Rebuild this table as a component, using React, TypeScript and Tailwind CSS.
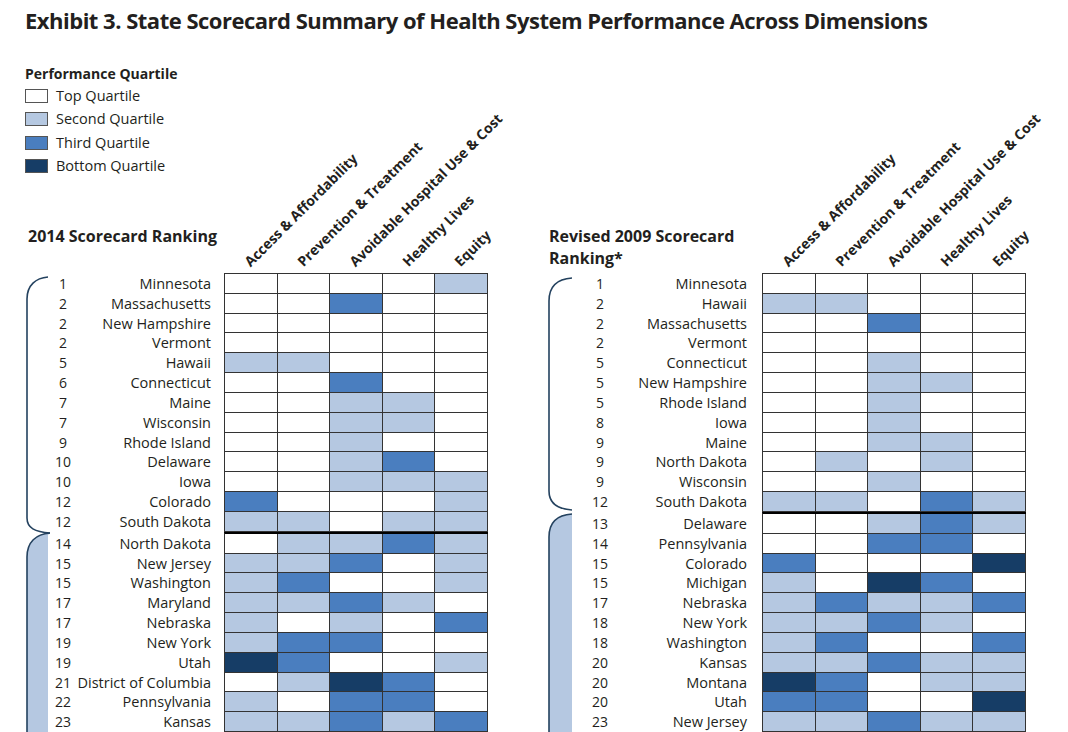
import React from 'react';

type Row = { rank: number; name: string; q: number[] };

const FILL = ['bg-white', 'bg-[#b5c8e1]', 'bg-[#4a7ebf]', 'bg-[#163d66]'];
const COLS = [53, 52, 53, 52, 53];
const COL_W = ['w-[53px]', 'w-[52px]', 'w-[53px]', 'w-[52px]', 'w-[53px]'];
const LABELS = [
  'Access & Affordability',
  'Prevention & Treatment',
  'Avoidable Hospital Use & Cost',
  'Healthy Lives',
  'Equity',
];

const rows2014: Row[] = [
  { rank: 1, name: 'Minnesota', q: [0, 0, 0, 0, 1] },
  { rank: 2, name: 'Massachusetts', q: [0, 0, 2, 0, 0] },
  { rank: 2, name: 'New Hampshire', q: [0, 0, 0, 0, 0] },
  { rank: 2, name: 'Vermont', q: [0, 0, 0, 0, 0] },
  { rank: 5, name: 'Hawaii', q: [1, 1, 0, 0, 0] },
  { rank: 6, name: 'Connecticut', q: [0, 0, 2, 0, 0] },
  { rank: 7, name: 'Maine', q: [0, 0, 1, 1, 0] },
  { rank: 7, name: 'Wisconsin', q: [0, 0, 1, 1, 0] },
  { rank: 9, name: 'Rhode Island', q: [0, 0, 1, 0, 0] },
  { rank: 10, name: 'Delaware', q: [0, 0, 1, 2, 0] },
  { rank: 10, name: 'Iowa', q: [0, 0, 1, 1, 1] },
  { rank: 12, name: 'Colorado', q: [2, 0, 0, 0, 1] },
  { rank: 12, name: 'South Dakota', q: [1, 1, 0, 1, 1] },
  { rank: 14, name: 'North Dakota', q: [0, 1, 1, 2, 1] },
  { rank: 15, name: 'New Jersey', q: [1, 1, 2, 0, 1] },
  { rank: 15, name: 'Washington', q: [1, 2, 0, 0, 1] },
  { rank: 17, name: 'Maryland', q: [1, 1, 2, 1, 0] },
  { rank: 17, name: 'Nebraska', q: [1, 0, 1, 0, 2] },
  { rank: 19, name: 'New York', q: [1, 2, 2, 0, 0] },
  { rank: 19, name: 'Utah', q: [3, 2, 0, 0, 1] },
  { rank: 21, name: 'District of Columbia', q: [0, 1, 3, 2, 0] },
  { rank: 22, name: 'Pennsylvania', q: [1, 0, 2, 2, 0] },
  { rank: 23, name: 'Kansas', q: [1, 1, 2, 1, 2] },
];

const rows2009: Row[] = [
  { rank: 1, name: 'Minnesota', q: [0, 0, 0, 0, 0] },
  { rank: 2, name: 'Hawaii', q: [1, 1, 0, 0, 0] },
  { rank: 2, name: 'Massachusetts', q: [0, 0, 2, 0, 0] },
  { rank: 2, name: 'Vermont', q: [0, 0, 0, 0, 0] },
  { rank: 5, name: 'Connecticut', q: [0, 0, 1, 0, 0] },
  { rank: 5, name: 'New Hampshire', q: [0, 0, 1, 1, 0] },
  { rank: 5, name: 'Rhode Island', q: [0, 0, 1, 0, 0] },
  { rank: 8, name: 'Iowa', q: [0, 0, 1, 0, 0] },
  { rank: 9, name: 'Maine', q: [0, 0, 1, 1, 0] },
  { rank: 9, name: 'North Dakota', q: [0, 1, 0, 1, 0] },
  { rank: 9, name: 'Wisconsin', q: [0, 0, 1, 0, 0] },
  { rank: 12, name: 'South Dakota', q: [1, 1, 0, 2, 1] },
  { rank: 13, name: 'Delaware', q: [0, 0, 1, 2, 1] },
  { rank: 14, name: 'Pennsylvania', q: [0, 0, 2, 2, 0] },
  { rank: 15, name: 'Colorado', q: [2, 0, 0, 0, 3] },
  { rank: 15, name: 'Michigan', q: [1, 0, 3, 2, 0] },
  { rank: 17, name: 'Nebraska', q: [1, 2, 1, 1, 2] },
  { rank: 18, name: 'New York', q: [1, 1, 2, 1, 0] },
  { rank: 18, name: 'Washington', q: [1, 2, 0, 0, 2] },
  { rank: 20, name: 'Kansas', q: [1, 1, 2, 1, 1] },
  { rank: 20, name: 'Montana', q: [3, 2, 0, 1, 1] },
  { rank: 20, name: 'Utah', q: [2, 2, 0, 0, 3] },
  { rank: 23, name: 'New Jersey', q: [1, 1, 2, 1, 1] },
];

const legend = [
  { label: 'Top Quartile', q: 0 },
  { label: 'Second Quartile', q: 1 },
  { label: 'Third Quartile', q: 2 },
  { label: 'Bottom Quartile', q: 3 },
];

// brace drawings, coordinates relative to the top of the table body
const LeftBrace = () => (
  <svg width="50" height="470" className="shrink-0">
    <path d="M50 260 C36 261 27 269 27 284 L27 470 L48 470 L48 262 Z" fill="#b5c8e1" />
    <path d="M50 260 C36 261 27 269 27 284 L27 470" fill="none" stroke="#24425f" strokeWidth="1.6" />
    <path d="M48 4 C36 5 27 12 27 26 L27 245 C27 255 35 259 50 260" fill="none" stroke="#24425f" strokeWidth="1.6" />
  </svg>
);

const RightBrace = () => (
  <svg width="50" height="470" className="shrink-0">
    <path d="M35 241 C20 242 12 250 12 264 L12 470 L35 470 Z" fill="#b5c8e1" />
    <path d="M35 241 C20 242 12 250 12 264 L12 470" fill="none" stroke="#24425f" strokeWidth="1.6" />
    <path d="M35 5 C20 6 12 14 12 28 L12 218 C12 230 20 236 35 237" fill="none" stroke="#24425f" strokeWidth="1.6" />
  </svg>
);

const ScoreRow: React.FC<{ row: Row; first: boolean; thick: boolean; nameW: string; gap: string }> = ({
  row,
  first,
  thick,
  nameW,
  gap,
}) => (
  <div className="flex items-end">
    <div className="w-[26px] shrink-0 text-center text-[14px] leading-[19.83px] h-[19.83px]">{row.rank}</div>
    <div className={`${nameW} shrink-0 text-right text-[14.5px] leading-[19.83px] h-[19.83px] whitespace-nowrap`}>
      {row.name}
    </div>
    <div className={`${gap} shrink-0`} />
    <div
      className={`flex border-l border-[#333] ${first ? 'border-t' : ''} ${
        thick ? 'border-t-2 border-t-black' : ''
      }`}
    >
      {row.q.map((q, i) => (
        <div key={i} className={`${COL_W[i]} h-[19.83px] border-r border-b border-[#333] ${FILL[q]}`} />
      ))}
    </div>
  </div>
);

const Labels = () => (
  <div className="flex">
    {COLS.map((_, i) => (
      <div key={i} className={`relative h-0 ${COL_W[i]}`}>
        <span className="absolute left-[28px] bottom-[4px] origin-bottom-left -rotate-45 whitespace-nowrap text-[14px] font-bold leading-none">
          {LABELS[i]}
        </span>
      </div>
    ))}
  </div>
);

export default function App() {
  return (
    <div className="w-[1068px] h-[732px] overflow-hidden bg-white text-[#231f20] font-['Open_Sans',sans-serif]">
      <h1 className="h-[40px] flex items-center pl-[25px] text-[22px] font-bold tracking-[-0.5px]">
        Exhibit 3. State Scorecard Summary of Health System Performance Across Dimensions
      </h1>

      <div className="flex">
        {/* 2014 ranking */}
        <div className="w-[537px] shrink-0">
          <div className="h-[233px] flex flex-col">
            <div className="pl-[25px] pt-[22px]">
              <div className="h-[22px] flex items-center text-[14px] font-bold">Performance Quartile</div>
              {legend.map((l) => (
                <div key={l.label} className="h-[23.5px] flex items-center gap-[8px]">
                  <span className={`w-[23px] h-[14px] border border-[#555] ${FILL[l.q]}`} />
                  <span className="text-[14.5px]">{l.label}</span>
                </div>
              ))}
            </div>
            <div className="flex-1 flex items-end">
              <div className="w-[224px] shrink-0 pl-[28px] pb-[26px] text-[16px] leading-[22px] font-bold">
                2014 Scorecard Ranking
              </div>
              <Labels />
            </div>
          </div>
          <div className="flex">
            <LeftBrace />
            <div className="flex flex-col">
              {rows2014.map((r, i) => (
                <ScoreRow key={i} row={r} first={i === 0} thick={i === 13} nameW="w-[135px]" gap="w-[13px]" />
              ))}
            </div>
          </div>
        </div>

        {/* revised 2009 ranking */}
        <div className="w-[531px] shrink-0">
          <div className="h-[233px] flex items-end">
            <div className="w-[225px] shrink-0 pl-[12px] pb-[4px] text-[16px] leading-[22px] font-bold">
              Revised 2009 Scorecard
              <br />
              Ranking*
            </div>
            <Labels />
          </div>
          <div className="flex">
            <RightBrace />
            <div className="flex flex-col">
              {rows2009.map((r, i) => (
                <ScoreRow key={i} row={r} first={i === 0} thick={i === 12} nameW="w-[134px]" gap="w-[15px]" />
              ))}
            </div>
          </div>
        </div>
      </div>
    </div>
  );
}
